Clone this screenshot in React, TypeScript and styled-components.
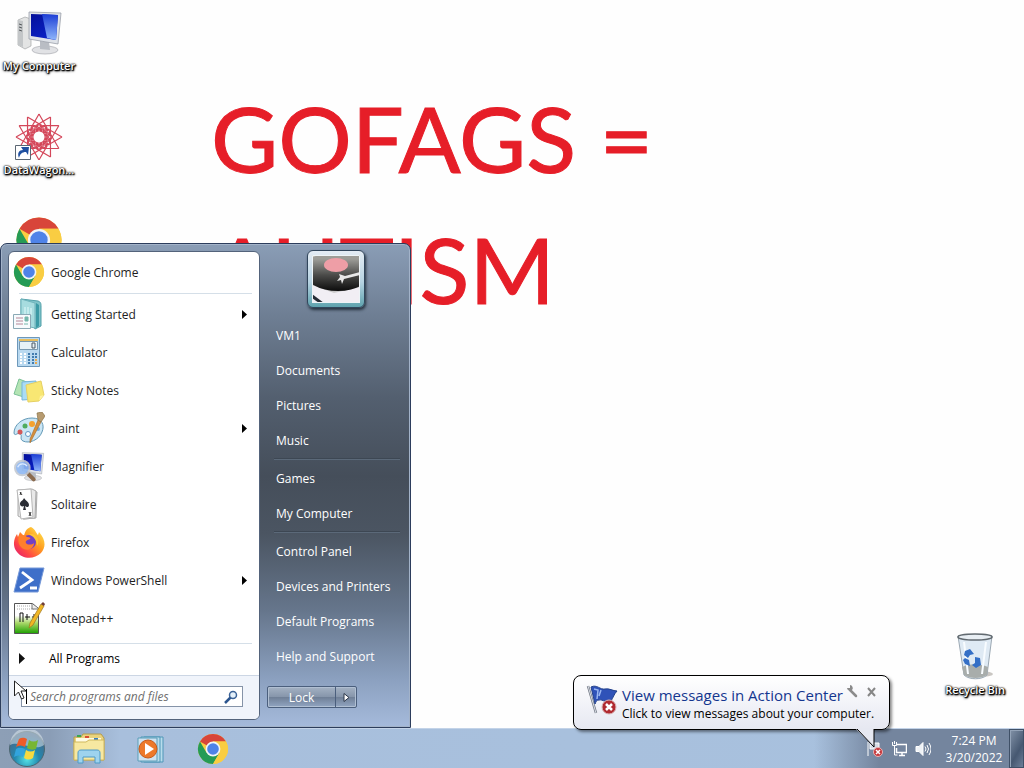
import React from "react";
import styled, { createGlobalStyle } from "styled-components";

const GlobalStyle = createGlobalStyle`
  *, *::before, *::after { box-sizing: border-box; }
  body { margin: 0; font-family: "Open Sans", "Noto Sans", sans-serif; font-size: 12px; color: #1e1e1e; background: #fefefe; }
  button, input { font: inherit; color: inherit; }
  button { padding: 0; border: 0; background: none; }
  a { color: inherit; text-decoration: none; }
  ul { list-style: none; margin: 0; padding: 0; }
  svg { display: block; flex: none; }
`;

const Page = styled.div`
  position: relative;
  display: flex;
  flex-direction: column;
  min-height: 100vh;
  overflow: hidden;
`;

const Desktop = styled.main`
  position: relative;
  flex: 1;
  display: flex;
  justify-content: space-between;
  background: #fefefe;
`;

const Wallpaper = styled.h1`
  position: absolute;
  top: 72px;
  left: 211px;
  margin: 0;
  font-family: Lato, "Open Sans", sans-serif;
  font-weight: 400;
  font-size: 92px;
  line-height: 131px;
  color: #e61e28;
  -webkit-text-stroke: 1px #e61e28;
  white-space: pre-line;
`;

const IconColumn = styled.div<{ $end?: boolean }>`
  position: relative;
  display: flex;
  flex-direction: column;
  justify-content: ${(p) => (p.$end ? "flex-end" : "flex-start")};
  gap: 24px;
  width: 78px;
  padding: ${(p) => (p.$end ? "0 0 16px" : "8px 0 0")};
  margin-right: ${(p) => (p.$end ? "10px" : "0")};
`;

const DesktopIcon = styled.a`
  display: flex;
  flex-direction: column;
  align-items: center;
  gap: 2px;
  height: 80px;
  white-space: nowrap;
  color: #fff;
  font-size: 11px;
  font-weight: 600;
  line-height: 16px;
  text-shadow: 0 0 1px #000, 1px 1px 1px #000, 0 0 2px #000, 1px 1px 2px #000, 0 1px 3px #444;
`;

const StartMenu = styled.nav`
  position: absolute;
  left: 0;
  bottom: 40px;
  display: flex;
  width: 411px;
  padding: 7px 9px 7px 7px;
  border: 1px solid #2c3d5c;
  border-radius: 7px 7px 0 0;
  box-shadow: inset 0 0 0 1px #a3b3c9;
  background: linear-gradient(#8a9db6 0%, #6e7e93 15%, #535f6f 32%, #454e5a 48%, #4b5562 60%, #66768c 76%, #8ba0bf 90%, #a5badb 100%);
`;

const LeftPane = styled.div`
  width: 252px;
  border: 1px solid #53637b;
  border-radius: 6px;
  background: #fff;
  overflow: hidden;
`;

const RuledList = styled.ul`
  padding: 1px 0 0;
`;

const Rule = styled.li<{ $last?: boolean }>`
  height: 1px;
  margin: ${(p) => (p.$last ? "6px 7px 0 10px" : "2px 7px 1px 10px")};
  background: #d5dfe8;
`;

const ProgramButton = styled.button<{ $all?: boolean }>`
  display: flex;
  align-items: center;
  gap: ${(p) => (p.$all ? "22px" : "6px")};
  width: 100%;
  height: ${(p) => (p.$all ? "31px" : "38px")};
  padding: ${(p) => (p.$all ? "0 8px 2px" : "0 12px 0 4px")};
  text-align: left;
  color: ${(p) => (p.$all ? "#000" : "#1e1e1e")};
`;

const Grow = styled.span`
  flex: 1;
`;

const SearchArea = styled.div`
  display: flex;
  height: 44px;
  padding: 10px 16px 12px 12px;
  border-top: 1px solid #ccd6e4;
  background: #f0f4fb;
`;

const SearchBox = styled.label`
  display: flex;
  align-items: center;
  flex: 1;
  padding: 0 4px;
  border: 1px solid #8593a8;
  background: #fff;
`;

const Caret = styled.span`
  width: 1px;
  height: 15px;
  background: #000;
`;

const SearchInput = styled.input`
  flex: 1;
  min-width: 0;
  padding: 0 0 0 3px;
  border: 0;
  outline: 0;
  background: none;
  font-style: italic;
  &::placeholder { color: #6f6f6f; opacity: 1; }
`;

const RightPane = styled.div`
  flex: 1;
  display: flex;
  flex-direction: column;
  padding-left: 7px;
`;

const UserPicture = styled.a`
  align-self: center;
  width: 58px;
  height: 58px;
  padding: 4px;
  margin: -1px 0 10px 4px;
  border: 1px solid #31465c;
  border-radius: 6px;
  background: linear-gradient(#e4ecf4, #b7d3e2 55%, #5fa3ae);
  box-shadow: 1px 2px 3px #26323f;
`;

const PlaceLink = styled.a`
  display: flex;
  align-items: center;
  height: 35px;
  padding-left: 9px;
  color: #fff;
`;

const PlaceRule = styled.li`
  height: 3px;
  margin: 0 1px 0 7px;
  border-top: 1px solid #3d4753;
  box-shadow: inset 0 1px #5b6979;
`;

const PowerRow = styled.div`
  display: flex;
  width: 90px;
  height: 22px;
  margin-top: 12px;
  border: 1px solid #4b5f7d;
  border-radius: 2px;
  color: #fff;
  background: linear-gradient(#a4b2c4 0%, #8796ab 48%, #6e7e95 50%, #91a5c2 100%);
  box-shadow: inset 0 0 0 1px #b0bfd2;
`;

const LockButton = styled.button`
  width: 67px;
`;

const PowerMenuButton = styled.button`
  flex: 1;
  display: grid;
  place-items: center;
  border-left: 1px solid #4b5f7d;
`;

const Taskbar = styled.footer`
  display: flex;
  height: 40px;
  border-top: 1px solid #c3d3e8;
  box-shadow: 0 -1px #55708f;
  background:
    linear-gradient(90deg, transparent calc(100% - 210px), #74859e calc(100% - 145px)),
    linear-gradient(90deg, #8d9fb6 0, #8a9db6 50px, #a8bfdc 120px, #a8c1de 100%);
`;

const TaskButton = styled.button<{ $start?: boolean }>`
  display: grid;
  place-items: center;
  width: ${(p) => (p.$start ? "58px" : "62px")};
  height: 39px;
  padding-right: ${(p) => (p.$start ? "4px" : "0")};
`;

const Tray = styled.div`
  display: flex;
  align-items: center;
  margin-left: auto;
  color: #fff;
`;

const TrayButton = styled.button`
  display: grid;
  place-items: center;
  width: 24px;
  height: 39px;
`;

const Clock = styled.button`
  width: 74px;
  padding-left: 4px;
  line-height: 17px;
  color: #fff;
  text-align: center;
`;

const ShowDesktop = styled.button`
  width: 15px;
  height: 39px;
  border: 1px solid #3f5067;
  box-shadow: inset 1px 1px #93a3b8;
  background: linear-gradient(120deg, #8292a8, #465871 60%, #6c7e98);
`;

const Balloon = styled.aside`
  position: absolute;
  right: 134px;
  bottom: 38px;
  display: flex;
  gap: 4px;
  width: 317px;
  height: 55px;
  padding: 7px 10px 0 12px;
  border: 1px solid #000;
  border-radius: 8px;
  background: linear-gradient(#fff, #f0f1f7 60%, #e6e8f1);
  box-shadow: 2px 2px 3px rgba(0, 0, 0, 0.45);
`;

const BalloonBody = styled.div`
  flex: 1;
  white-space: nowrap;
  color: #000;
`;

const BalloonHead = styled.div`
  display: flex;
  gap: 4px;
`;

const BalloonTitle = styled.h2`
  margin: 0;
  width: 220px;
  font-size: 15px;
  font-weight: 400;
  line-height: 24px;
  color: #14368f;
`;

const BalloonText = styled.p`
  margin: 0;
  line-height: 14px;
`;

const SmallButton = styled.button`
  width: 14px;
  height: 16px;
`;

const BalloonTail = styled.svg`
  position: absolute;
  right: 14px;
  top: 52px;
`;

const Pointer = styled.svg`
  position: absolute;
  left: 14px;
  bottom: 68px;
`;

const Chrome = ({ size = 32 }: { size?: number }) => (
  <svg width={size} height={size} viewBox="0 0 32 32">
    <circle cx="16" cy="16" r="15" fill="#f9cd42" />
    <path d="M16 16 3 8.500A15 15 0 0 1 29 8.500H16Z" fill="#d8453a" />
    <path d="M3 8.500A15 15 0 0 0 16 31L22.500 19.800 16 16 9.500 19.700Z" fill="#259b55" />
    <path d="M16 8.500H29A15 15 0 0 1 16 31L22.500 19.800Z" fill="#f9cd42" />
    <circle cx="16" cy="16" r="7.400" fill="#f2f5f7" />
    <circle cx="16" cy="16" r="5.800" fill="#4f83e8" />
  </svg>
);

const Computer = ({ lens = false, size = 32 }: { lens?: boolean; size?: number }) => (
  <svg width={size} height={size} viewBox="0 0 48 48">
    <defs>
      <linearGradient id="screen" x1="0" y1="0" x2=".6" y2="1">
        <stop offset="0" stopColor="#04109a" /><stop offset="1" stopColor="#0a22c8" />
      </linearGradient>
      <linearGradient id="glare" x2="0" y2="1">
        <stop offset="0" stopColor="#1c3ed6" /><stop offset="1" stopColor="#8fb6fa" />
      </linearGradient>
    </defs>
    {!lens && <path d="m3 12 7-3 6 2v27l-6 3-7-4Z" fill="#e3e4e4" stroke="#a3a6a8" strokeWidth=".7" />}
    {!lens && <path d="m3 12 5 1v26l-5-2Z" fill="#c3c6c8" />}
    {!lens && <path d="M4 16l3 1M4 19l3 1M4 22l3 1" stroke="#55595c" />}
    <ellipse cx="30" cy="42" rx="13" ry="4" fill="#e1e2e5" stroke="#a9abb0" strokeWidth=".7" />
    <path d="m25 33 9 1 1 8-10-1Z" fill="#b9bdc4" />
    <path d="m14 4 32 1-3 31-29-5Z" fill="#dfe3e9" stroke="#9aa0aa" strokeWidth=".8" />
    <path d="m16 6 27 1-2 25-25-4Z" fill="url(#screen)" />
    <path d="m27 6 16 1-2 25-9-2Z" fill="url(#glare)" />
    {lens && <g><path d="m22 35 9 9" stroke="#8b6b4e" strokeWidth="6" strokeLinecap="round" /><circle cx="14" cy="27" r="11" fill="#8fb8f2" opacity=".9" stroke="#c3c9d2" strokeWidth="3" /><path d="M7 26c3-7 11-6 14-2" fill="none" stroke="#dceaff" strokeWidth="2" /></g>}
  </svg>
);

const DataWagon = () => (
  <svg width="48" height="48" viewBox="0 0 48 48">
    <g fill="none" stroke="#d4475a" strokeWidth="1.200">
      {Array.from({ length: 12 }, (_, i) => (
        <g key={i} transform={`rotate(${i * 30} 24 25)`}>
          <path d="M24 2 32 16 25 19M24 2 16 16 23 19" />
          <circle cx="24" cy="16" r="3" />
        </g>
      ))}
    </g>
    <path d="M.500 33.500h15v14h-15Z" fill="#fff" stroke="#5a6673" />
    <path d="M4 46c-2-5 0-8 4-8l-2-3 8 0-1 8-2-3c-4 0-6 2-7 6Z" fill="#1f4fa0" />
  </svg>
);

const GettingStarted = () => (
  <svg width="32" height="32" viewBox="0 0 32 32">
    <path d="m8 1 17 2c3 1 3 3 3 5v20l-6 3-2-4-12 2Z" fill="#7fc3c9" stroke="#519fa8" />
    <path d="m8 1 14 4v25l-14-3Z" fill="#a7dcdf" stroke="#6fb3bb" />
    <path d="m23 5 3 2v21l-3 2Z" fill="#3b9aa5" />
    <path d="M12 9v7M15 9v7m3-6v7" stroke="#e2fbfb" />
    <path d="M.500 16.500h17v14h-17Z" fill="#f7fbfd" stroke="#8ba9b5" />
    <path d="M3 20h7M3 23h7M3 26h7" stroke="#b58798" />
    <path d="M12 19h3v4h-3ZM11 26h4" fill="#75b7ac" stroke="#75b7ac" />
  </svg>
);

const Calculator = () => (
  <svg width="32" height="32" viewBox="0 0 32 32">
    <path d="M4.500 1.500h22v29h-22Z" fill="#b9d9f0" stroke="#6d98ba" />
    <path d="M6 3h19v2H6Z" fill="#e8bd5d" />
    <path d="M6.500 5.500h18v8h-18Z" fill="#e7f2f8" stroke="#7899b1" />
    <path d="M19 7h3v5h-3Z" fill="none" stroke="#4a5965" />
    {[17, 20, 23, 26].map((y) => [7, 11, 15, 19, 22].map((x) => (
      <rect key={`${x}-${y}`} x={x} y={y} width="2" height="2" fill={x === 22 && y > 22 ? "#e7a84e" : x > 14 ? "#427caf" : "#fff"} />
    )))}
  </svg>
);

const StickyNotes = () => (
  <svg width="32" height="32" viewBox="0 0 32 32">
    <path d="m6 5 13 5-5 14-13-4Z" fill="#b4e4b4" stroke="#7cc197" />
    <path d="m9 8 14-1 1 18-15 1Z" fill="#aadcf5" stroke="#77b5da" />
    <path d="m13 11 15-4 3 14-5 6-11 1Z" fill="#f8e773" stroke="#e6d063" />
    <path d="m26 27 1-5 4-1" fill="#fff3a0" />
  </svg>
);

const Paint = () => (
  <svg width="32" height="32" viewBox="0 0 32 32">
    <path d="M19 6c10 0 13 7 10 14-3 8-13 12-19 9-4-2 0-6-3-7-3-2-5 3-6-1C1 13 9 6 19 6Z" fill="#cbe6f5" stroke="#6298b6" />
    <circle cx="7" cy="20" r="2.500" fill="#d45858" /><circle cx="12" cy="14" r="2.500" fill="#4fac5e" />
    <circle cx="19" cy="12" r="3" fill="#f5a22f" /><circle cx="25" cy="17" r="2" fill="#76aedf" />
    <circle cx="15" cy="22" r="2.500" fill="#fff" stroke="#6298c6" />
    <path d="m17 31 0-4 8-19 3 2Z" fill="#d6903c" stroke="#a46b2b" strokeWidth=".6" />
    <path d="m25 8 3 2 4-6-3-4-5 1Z" fill="#b79b70" stroke="#8b7246" strokeWidth=".7" />
  </svg>
);

const Solitaire = () => (
  <svg width="32" height="32" viewBox="0 0 32 32">
    <path d="m9 3 15 1-1 26-13 1Z" fill="#d8d8d8" stroke="#aaa" />
    <path d="m5 2 14-1 4 2-1 27-11 1-6-3Z" fill="#e9e9e9" stroke="#aaa" />
    <path d="m4 2 14-1 2 28-12 2Z" fill="#fff" stroke="#b6b6b6" />
    <path d="M11 10c2 3 5 4 5 7 0 2-2 3-4 1l1 4h-3l1-4c-2 1-4 0-4-2 0-3 3-3 4-6Z" fill="#292c34" />
    <path d="m7 4 2 3M16 24l2 4M8 4l-1 3M18 24l-2 4" stroke="#333" />
  </svg>
);

const Firefox = () => (
  <svg width="32" height="32" viewBox="0 0 32 32">
    <defs><linearGradient id="fox" x1="1" y1="0" x2="0" y2="1"><stop stopColor="#fff25a" /><stop offset=".4" stopColor="#ff9e20" /><stop offset=".7" stopColor="#ff4844" /><stop offset="1" stopColor="#dd147a" /></linearGradient></defs>
    <path d="M18 1c5 3 5 6 7 8l1-3c7 8 7 15 2 21-7 7-19 6-24-1-5-6-3-14 0-18l1 3 2-5 4 4c1-5 3-8 7-9Z" fill="url(#fox)" />
    <circle cx="16" cy="16" r="7" fill="#7140c4" />
    <path d="M6 10c4-2 6-1 8 1 3 0 4 1 3 2-3 1-5 2-4 4s6 2 8 0c0 7-9 9-13 4-3-3-3-7-2-11Z" fill="#ff7f2b" />
    <path d="M16 8c9-1 11 8 8 12 0-6-3-9-8-12Z" fill="#ffc634" />
  </svg>
);

const PowerShell = () => (
  <svg width="32" height="32" viewBox="0 0 32 32">
    <path d="M7 4h24l-6 24H1Z" fill="#3e6fc9" stroke="#7598d8" />
    <path d="m9 8 10 8L7 24M17 24h7" fill="none" stroke="#fff" strokeWidth="2.800" />
  </svg>
);

const Notepad = () => (
  <svg width="32" height="32" viewBox="0 0 32 32">
    <defs><linearGradient id="note" x2="0" y2="1"><stop offset=".4" stopColor="#fff" /><stop offset=".65" stopColor="#a9d768" /><stop offset="1" stopColor="#1ca000" /></linearGradient></defs>
    <path d="M1.500 1.500h18l6 5v25h-24Z" fill="url(#note)" stroke="#555" />
    <path d="M4 4h14M4 7h17" stroke="#aaa" strokeDasharray="1 1" /><path d="M19 2v5h6" fill="#eee" stroke="#777" />
    <path d="M7 20v-9h3v9M12 15h5m-3-3v6m5-3h5m-3-3v6" fill="none" stroke="#111" />
    <path d="m28 2 3 2-11 19-4 3 1-5Z" fill="#f0b724" stroke="#9e7421" strokeWidth=".7" /><path d="m28 2 2-2 2 2-1 2Z" fill="#703c35" />
  </svg>
);

const Turntable = () => (
  <svg width="48" height="48" viewBox="0 0 48 48">
    <defs>
      <linearGradient id="disc" x2="0" y2="1"><stop offset=".2" stopColor="#9d9d98" /><stop offset=".6" stopColor="#4b4b49" /><stop offset="1" stopColor="#0c0c0c" /></linearGradient>
      <linearGradient id="deck" x2="0" y2="1"><stop stopColor="#c9cac2" /><stop offset=".7" stopColor="#bcbcbc" /><stop offset="1" stopColor="#fbf8fd" /></linearGradient>
      <clipPath id="frame"><path d="M0 0h48v48H0Z" /></clipPath>
    </defs>
    <g clipPath="url(#frame)">
      <path d="M0 0h48v48H0Z" fill="url(#deck)" />
      <path d="M0 30 22 38 48 32v16H0Z" fill="#f1eef4" />
      <ellipse cx="26" cy="16" rx="34" ry="20" fill="url(#disc)" />
      <ellipse cx="24" cy="10" rx="12" ry="7" fill="#ee9ea6" />
      <path d="M48 17 33 21l-6-2 1 3-3 4 4-1 1 4 2-5 16-4" fill="#e8e8e8" />
      <path d="m0 39 12 9H7l-7-5Z" fill="#252b34" />
    </g>
    <path d="M.500 .500h47v47H.500Z" fill="none" stroke="#eef4f7" />
  </svg>
);

const StartOrb = () => (
  <svg width="40" height="38" viewBox="0 0 40 38">
    <defs>
      <radialGradient id="orb" cx=".5" cy=".8" r=".7"><stop stopColor="#54e1e5" /><stop offset=".5" stopColor="#2387ae" /><stop offset="1" stopColor="#47698a" /></radialGradient>
    </defs>
    <circle cx="20" cy="19" r="17.500" fill="url(#orb)" stroke="#4c6670" />
    <path d="M3 15A17 17 0 0 1 37 15C28 22 12 10 3 15Z" fill="#e4eef2" opacity=".5" />
    <path d="M12 9c3-2 6-1 8 0l-2 8c-3-2-6-2-9 0Z" fill="#ed5b28" /><path d="M22 10c3 2 6 2 9 0l-2 9c-3 1-6 1-9-1Z" fill="#77b633" />
    <path d="M9 19c3-2 6-1 9 0l-2 8c-3-2-6-2-9 0Z" fill="#32a4dd" /><path d="M19 20c3 2 6 2 9 0l-2 8c-3 2-6 2-9 0Z" fill="#f7da3f" />
  </svg>
);

const Explorer = () => (
  <svg width="34" height="34" viewBox="0 0 34 34">
    <path d="M2 5h7l2-3h18l3 4v22H2Z" fill="#ead37c" stroke="#b49b4c" />
    <path d="M4 6h25v4H4Z" fill="#fffbe4" /><path d="M5 3h4v2H5Z" fill="#3aa64f" /><path d="M13 4h4v2h-4Z" fill="#d94c34" /><path d="M22 6h4v2h-4Z" fill="#387ebd" />
    <path d="M2 10h12l3-2h15v20H2Z" fill="#f7e8a1" stroke="#d0b85f" />
    <path d="M6 31V21c0-2 1-3 3-3h16c2 0 3 1 3 3v10h-5v-6H11v6Z" fill="#9ed3ee" stroke="#4f9ac7" />
  </svg>
);

const MediaPlayer = () => (
  <svg width="32" height="32" viewBox="0 0 32 32">
    <path d="M9 4h19v25H9Z" fill="#b8dcec" stroke="#4e96b7" /><path d="M6 4h19v25H6Z" fill="#b8dcec" stroke="#4e96b7" />
    <path d="M3 5h19v23H3Z" fill="#cfe2f0" stroke="#5a9eb9" /><circle cx="13" cy="16" r="9" fill="#ed792a" stroke="#c65a19" />
    <path d="m10 10 9 6-9 6Z" fill="#fff" />
  </svg>
);

const ErrorFlag = () => (
  <svg width="32" height="34" viewBox="0 0 32 34">
    <path d="m2 3 8 27" stroke="#737985" strokeWidth="2.500" /><path d="m2 3 8 27" stroke="#d7dce4" />
    <path d="M5 4c6-3 9 3 14 2 4-1 8 2 12 2-3 3-4 7-6 10-5 3-8-2-12-1-3 0-3 2-4 4Z" fill="#2f52b8" stroke="#23428c" />
    <path d="m8 6 4 1-1 9M15 7l-2 6" fill="none" stroke="#99b6f2" strokeWidth="1.500" />
    <circle cx="23" cy="24" r="7" fill="#b02a30" stroke="#d9b3b5" /><path d="m20 21 6 6m0-6-6 6" stroke="#fff" strokeWidth="2.500" />
  </svg>
);

const RecycleBin = () => (
  <svg width="48" height="48" viewBox="0 0 48 48">
    <ellipse cx="30" cy="42" rx="12" ry="3" fill="#c9c6c2" />
    <path d="m7 4 34 0-5 39c-5 5-18 5-23 0Z" fill="#dbe8f3" fillOpacity=".9" stroke="#9ba8b3" />
    <path d="m11 35c8-4 18-3 26 0l-1 8c-6 4-17 4-23 0Z" fill="#a8adab" />
    <ellipse cx="24" cy="5" rx="17" ry="3" fill="#e8eef3" stroke="#626a70" strokeWidth="1.500" />
    <path d="m13 10 4 32M35 10l-4 32" stroke="#f8fcff" strokeWidth="2" />
    <path d="m14 19 5-2 4 5-4 1-2 3-4-3Zm10 6 5 1 1 7-5 3-4-3 3-2Zm-10 1 4 2 1 6-5-2-2-4Z" fill="#346fc6" />
  </svg>
);

const Arrow = () => <svg width="5" height="9" viewBox="0 0 5 9"><path d="M0 0v9l5-4.500Z" fill="#000" /></svg>;

const Magnify = () => (
  <svg width="14" height="14" viewBox="0 0 14 14"><path d="m7 7-6 6" stroke="#2c568f" strokeWidth="2.500" /><circle cx="9" cy="5" r="3.500" fill="#e4f0fa" stroke="#3b6297" strokeWidth="1.500" /></svg>
);

const programs: { name: string; icon: React.ReactNode; more?: boolean }[] = [
  { name: "Getting Started", icon: <GettingStarted />, more: true },
  { name: "Calculator", icon: <Calculator /> },
  { name: "Sticky Notes", icon: <StickyNotes /> },
  { name: "Paint", icon: <Paint />, more: true },
  { name: "Magnifier", icon: <Computer lens /> },
  { name: "Solitaire", icon: <Solitaire /> },
  { name: "Firefox", icon: <Firefox /> },
  { name: "Windows PowerShell", icon: <PowerShell />, more: true },
  { name: "Notepad++", icon: <Notepad /> },
];

const places = [["VM1", "Documents", "Pictures", "Music"], ["Games", "My Computer"], ["Control Panel", "Devices and Printers", "Default Programs", "Help and Support"]];

export default function App() {
  return (
    <Page>
      <GlobalStyle />
      <Desktop>
        <Wallpaper>{"GOFAGS =\nAUTISM"}</Wallpaper>
        <IconColumn>
          <DesktopIcon href="#computer"><Computer size={48} />My Computer</DesktopIcon>
          <DesktopIcon href="#datawagon"><DataWagon />DataWagon...</DesktopIcon>
          <DesktopIcon href="#chrome" aria-label="Google Chrome"><Chrome size={48} /></DesktopIcon>
        </IconColumn>
        <IconColumn $end>
          <DesktopIcon href="#bin"><RecycleBin />Recycle Bin</DesktopIcon>
        </IconColumn>
      </Desktop>

      <Taskbar>
        <TaskButton $start aria-label="Start"><StartOrb /></TaskButton>
        <TaskButton aria-label="Windows Explorer"><Explorer /></TaskButton>
        <TaskButton aria-label="Media Player"><MediaPlayer /></TaskButton>
        <TaskButton aria-label="Google Chrome"><Chrome /></TaskButton>
        <Tray>
          <TrayButton aria-label="Action Center">
            <svg width="16" height="16" viewBox="0 0 16 16"><path d="M1 1v14M3 2h9v6H3Z" fill="#d5dce6" stroke="#fff" /><circle cx="11" cy="11" r="4.500" fill="#c6373b" stroke="#e7b4b6" /><path d="m9 9 4 4m0-4-4 4" stroke="#fff" strokeWidth="1.500" /></svg>
          </TrayButton>
          <TrayButton aria-label="Network">
            <svg width="16" height="16" viewBox="0 0 16 16" fill="none" stroke="#fff"><path d="M6 3.500h9.500v8H5.500V7M8 14.500h6M11 12v2" strokeWidth="1.500" /><path d="M1.500 1v3.500h4V1M3.500 0v3M3.500 5v9h3" /></svg>
          </TrayButton>
          <TrayButton aria-label="Volume">
            <svg width="16" height="16" viewBox="0 0 16 16" fill="none" stroke="#fff"><path d="M1 5.500h3l4-4v13l-4-4H1Z" fill="#eef2f6" /><path d="M10 5.500q2 2.500 0 5M12 4q3 4 0 8M14 2q4 6 0 12" /></svg>
          </TrayButton>
          <Clock>7:24 PM<br />3/20/2022</Clock>
          <ShowDesktop aria-label="Show desktop" />
        </Tray>
      </Taskbar>

      <StartMenu aria-label="Start menu">
        <LeftPane>
          <RuledList>
            <li><ProgramButton><Chrome />Google Chrome</ProgramButton></li>
            <Rule />
            {programs.map((p) => (
              <li key={p.name}><ProgramButton>{p.icon}{p.name}<Grow />{p.more && <Arrow />}</ProgramButton></li>
            ))}
            <Rule $last />
            <li><ProgramButton $all><svg width="10" height="11" viewBox="0 0 10 11"><path d="M2 0v11l6-5.500Z" fill="#111" /></svg>All Programs</ProgramButton></li>
          </RuledList>
          <SearchArea>
            <SearchBox>
              <Caret />
              <SearchInput type="text" aria-label="Search programs and files" placeholder="Search programs and files" />
              <Magnify />
            </SearchBox>
          </SearchArea>
        </LeftPane>
        <RightPane>
          <UserPicture href="#user" aria-label="User picture"><Turntable /></UserPicture>
          {places.map((group, i) => (
            <ul key={group[0]}>
              {i > 0 && <PlaceRule />}
              {group.map((name) => <li key={name}><PlaceLink href="#place">{name}</PlaceLink></li>)}
            </ul>
          ))}
          <PowerRow>
            <LockButton>Lock</LockButton>
            <PowerMenuButton aria-label="Power options"><svg width="7" height="9" viewBox="0 0 7 9"><path d="M1 .500v8l5-4Z" fill="#fff" stroke="#2b3546" /></svg></PowerMenuButton>
          </PowerRow>
        </RightPane>
      </StartMenu>

      <Balloon>
        <ErrorFlag />
        <BalloonBody>
          <BalloonHead>
            <BalloonTitle>View messages in Action Center</BalloonTitle>
            <SmallButton aria-label="Options"><svg width="12" height="14" viewBox="0 0 12 14"><path d="m4 6 6 6" stroke="#8b8b8b" strokeWidth="2.500" strokeLinecap="round" /><path d="M1 4a3 3 0 0 0 5 2 3 3 0 0 0-2-5v3H1Z" fill="#8b8b8b" /></svg></SmallButton>
            <SmallButton aria-label="Close"><svg width="14" height="14" viewBox="0 0 14 14"><path d="m4 4 7 8m0-8-7 8" stroke="#868686" strokeWidth="2" /></svg></SmallButton>
          </BalloonHead>
          <BalloonText>Click to view messages about your computer.</BalloonText>
        </BalloonBody>
        <BalloonTail width="20" height="20" viewBox="0 0 20 20"><path d="M1 1 19 19V1" fill="#e6e8f1" /><path d="m2 1 17 18V1" fill="none" stroke="#000" /><path d="M3 0h15v2H3Z" fill="#e6e8f1" /></BalloonTail>
      </Balloon>

      <Pointer width="13" height="20" viewBox="0 0 13 20"><path d="M.500 1v15l4-4 3 7 2.500-1-3-7h5Z" fill="#fff" stroke="#222" /></Pointer>
    </Page>
  );
}
